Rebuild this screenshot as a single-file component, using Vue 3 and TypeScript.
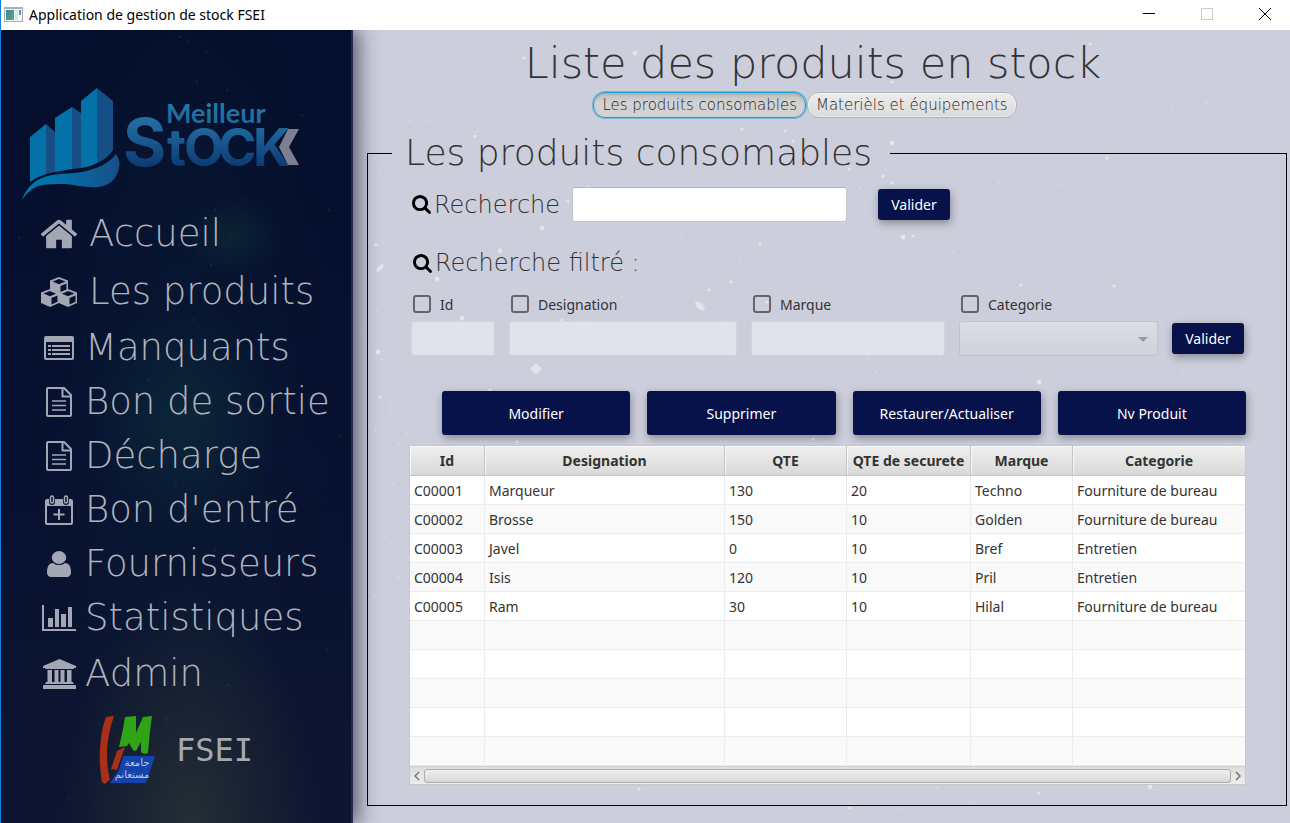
<script setup lang="ts">
import { ref } from 'vue'

interface NavItem {
  label: string
  icon: string
  width: number
  height: number
  tall?: boolean
  wide?: boolean
}

const navItems: NavItem[] = [
  { label: 'Accueil', icon: 'home', width: 36, height: 30, tall: true, wide: true },
  { label: 'Les produits', icon: 'cubes', width: 38, height: 32, tall: true, wide: true },
  { label: 'Manquants', icon: 'list', width: 30, height: 24 },
  { label: 'Bon de sortie', icon: 'file', width: 26, height: 30 },
  { label: 'Décharge', icon: 'file', width: 26, height: 30 },
  { label: "Bon d'entré", icon: 'calendar', width: 28, height: 30 },
  { label: 'Fournisseurs', icon: 'user', width: 24, height: 26 },
  { label: 'Statistiques', icon: 'chart', width: 34, height: 26 },
  { label: 'Admin', icon: 'bank', width: 33, height: 30, tall: true },
]

const tabs = ['Les produits consomables', 'Materièls et équipements']
const activeTab = ref(0)

const search = ref('')
const filterId = ref('')
const filterDesignation = ref('')
const filterMarque = ref('')
const filterCategorie = ref('')
const useId = ref(false)
const useDesignation = ref(false)
const useMarque = ref(false)
const useCategorie = ref(false)

const actions = ['Modifier', 'Supprimer', 'Restaurer/Actualiser', 'Nv Produit']

const columns = ['Id', 'Designation', 'QTE', 'QTE de securete', 'Marque', 'Categorie']
const products: string[][] = [
  ['C00001', 'Marqueur', '130', '20', 'Techno', 'Fourniture de bureau'],
  ['C00002', 'Brosse', '150', '10', 'Golden', 'Fourniture de bureau'],
  ['C00003', 'Javel', '0', '10', 'Bref', 'Entretien'],
  ['C00004', 'Isis', '120', '10', 'Pril', 'Entretien'],
  ['C00005', 'Ram', '30', '10', 'Hilal', 'Fourniture de bureau'],
]
const emptyRows = 5

// [x, y, size] of every light speck on the main background
const specks: number[][] = [
  [171, 28, 2], [282, 23, 3], [287, 25, 1], [122, 106, 2], [123, 102, 1], [28, 140, 1], [74, 91, 1], [57, 91, 1],
  [215, 171, 2], [389, 99, 2], [233, 151, 1], [234, 157, 2], [189, 198, 3], [316, 176, 1], [432, 101, 2], [440, 111, 2],
  [539, 113, 3], [496, 139, 2], [530, 146, 2], [539, 153, 2], [507, 158, 1], [573, 95, 1], [620, 136, 1], [646, 152, 1],
  [754, 128, 2], [706, 155, 1], [737, 14, 2], [844, 54, 1], [819, 76, 1], [854, 73, 1], [539, 52, 2], [582, 41, 1],
  [550, 207, 3], [560, 206, 2], [600, 222, 1], [645, 215, 1], [587, 226, 1], [668, 255, 2], [646, 266, 1], [761, 256, 2],
  [23, 215, 2], [25, 250, 1], [24, 280, 1], [147, 221, 3], [84, 249, 3], [146, 256, 1], [194, 258, 1], [253, 252, 1],
  [109, 288, 3], [49, 290, 1], [42, 310, 1], [25, 322, 3], [29, 330, 1], [209, 290, 2], [231, 294, 1], [269, 267, 1],
  [256, 267, 1], [303, 267, 1], [356, 260, 2], [378, 252, 2], [387, 228, 1], [407, 214, 2], [359, 241, 1], [328, 207, 1],
  [316, 202, 1], [338, 218, 1], [414, 272, 2], [351, 305, 1], [382, 324, 1], [375, 294, 1], [686, 352, 3], [714, 360, 1],
  [830, 341, 1], [855, 350, 1], [515, 328, 1], [516, 332, 1], [523, 342, 1], [137, 361, 3], [252, 362, 1], [27, 367, 2],
  [37, 378, 1], [22, 400, 1], [54, 404, 1], [46, 414, 1], [164, 412, 2], [173, 416, 1], [460, 409, 2], [877, 414, 1],
  [40, 454, 1], [32, 508, 1], [46, 547, 1], [21, 566, 1], [286, 759, 2], [444, 783, 1], [373, 789, 1], [497, 778, 2],
  [584, 758, 1], [686, 763, 2], [797, 757, 3], [802, 760, 1], [909, 634, 1], [922, 522, 1], [8, 300, 1], [7, 92, 1],
  [917, 702, 1], [618, 774, 1], [546, 779, 1], [229, 797, 1], [908, 292, 1], [756, 294, 1], [588, 324, 1], [620, 318, 1],
]

// [x, y] of the dust on the sidebar background
const dust: number[][] = [
  [179, 7], [187, 12], [205, 22], [226, 60], [196, 52], [301, 85], [245, 170], [214, 180],
  [178, 215], [210, 235], [170, 260], [120, 310], [192, 290], [230, 330], [328, 180], [148, 350],
  [161, 420], [223, 440], [175, 455], [140, 480], [214, 520], [188, 600], [122, 640], [227, 655],
  [166, 690], [339, 406], [326, 620], [68, 768], [190, 715], [18, 208], [127, 127], [202, 130],
]
</script>

<template>
  <div class="window">
    <header class="titlebar">
      <svg class="app-icon" width="19" height="15" viewBox="0 0 19 15" aria-hidden="true">
        <rect x="0" y="0" width="19" height="15" fill="#a9adb5" />
        <rect x="1" y="2" width="17" height="12" fill="#f4f6f8" />
        <rect x="2" y="3" width="8" height="10" fill="url(#appGreen)" />
        <rect x="11" y="3" width="3" height="10" fill="#dfe6e6" />
        <rect x="15" y="3" width="2" height="5" fill="#5d8fd0" />
        <defs>
          <linearGradient id="appGreen" x1="0" y1="0" x2="1" y2="1">
            <stop offset="0" stop-color="#3f7f9d" />
            <stop offset="1" stop-color="#58b079" />
          </linearGradient>
        </defs>
      </svg>
      <span class="app-name">Application de gestion de stock FSEI</span>
      <div class="window-controls">
        <button type="button" aria-label="Réduire">
          <svg width="12" height="12" viewBox="0 0 12 12"><path d="M0 5.5h12" stroke="#000" /></svg>
        </button>
        <button type="button" aria-label="Agrandir" disabled>
          <svg width="12" height="12" viewBox="0 0 12 12"><rect x=".5" y=".5" width="11" height="11" fill="none" stroke="#ccc" /></svg>
        </button>
        <button type="button" aria-label="Fermer">
          <svg width="12" height="12" viewBox="0 0 12 12"><path d="M0 0l12 12M12 0L0 12" stroke="#000" /></svg>
        </button>
      </div>
    </header>

    <div class="body">
      <aside class="sidebar">
        <svg class="dust" viewBox="0 0 350 793" preserveAspectRatio="xMidYMin slice" aria-hidden="true">
          <circle v-for="(d, i) in dust" :key="i" :cx="d[0]" :cy="d[1]" r="1" />
        </svg>

        <svg class="brand" width="280" height="116" viewBox="0 0 280 116" role="img" aria-label="Meilleur Stock">
          <defs>
            <linearGradient id="brandText" gradientUnits="userSpaceOnUse" x1="0" y1="18" x2="0" y2="82">
              <stop offset="0" stop-color="#2377a6" />
              <stop offset=".4" stop-color="#1f6499" />
              <stop offset="1" stop-color="#0a3772" />
            </linearGradient>
            <linearGradient id="brandWave" x1="0" y1="0" x2="1" y2="0">
              <stop offset="0" stop-color="#0078ae" />
              <stop offset=".4" stop-color="#0370a7" />
              <stop offset="1" stop-color="#174f88" />
            </linearGradient>
          </defs>
          <path d="M9 50L25 37V87Q16 90 9 95Z" fill="#0472a8" />
          <path d="M25 37L34 45V85L25 87Z" fill="#154f86" />
          <path d="M34 31L51 20V82L34 85Z" fill="#0472a8" />
          <path d="M51 20L60 26V81L51 82Z" fill="#154f86" />
          <path d="M60 14L76 1V76Q69 80 60 81Z" fill="#0472a8" />
          <path d="M76 1L92 14V63Q86 72 76 76Z" fill="#154f86" />
          <path d="M1 113C5 101 14 91 31 88C44 86 51 87 61 85C75 82 88 77 95 67C100 74 99 81 96 87C93 94 87 99 77 100C65 101 56 98 44 97C35 97 25 97 17 99C10 102 5 107 1 113Z" fill="url(#brandWave)" />
          <g fill="url(#brandText)">
            <text x="145" y="36" class="brand-top">Meilleur</text>
            <text x="102" y="79" class="brand-s">S</text>
            <text x="146" y="79" class="brand-low">t</text>
            <text x="163" y="79" class="brand-low">O</text>
            <text x="197" y="79" class="brand-low">C</text>
            <text x="232" y="79" class="brand-low">K</text>
          </g>
          <path d="M267 42h11L268 60l10 18h-11L258 60Z" fill="#7c7f90" />
        </svg>

        <nav class="nav" aria-label="Menu principal">
          <a
            v-for="item in navItems"
            :key="item.label"
            href="#"
            class="nav-item"
            :class="{ tall: item.tall, wide: item.wide }"
            @click.prevent
          >
            <span class="nav-icon">
              <svg v-if="item.icon === 'home'" :width="item.width" :height="item.height" viewBox="90 240 1612 1310">
                <path fill="currentColor" d="M1472 992v480q0 26-19 45t-45 19h-384v-384h-256v384h-384q-26 0-45-19t-19-45v-480q0-1 .5-3t.5-3l575-474 575 474q1 2 1 6zm223-69l-62 74q-8 9-21 11h-3q-13 0-21-7l-692-577-692 577q-12 8-24 7-13-2-21-11l-62-74q-8-10-7-23.5t11-21.5l719-599q32-26 76-26t76 26l244 204v-195q0-14 9-23t23-9h192q14 0 23 9t9 23v408l219 182q10 8 11 21.5t-7 23.5z" />
              </svg>
              <svg v-else-if="item.icon === 'cubes'" :width="item.width" :height="item.height" viewBox="0 0 38 32">
                <g fill="currentColor" fill-rule="evenodd">
                  <path v-for="(o, i) in [[19, 10], [10, 22], [28, 22]]" :key="i" :transform="`translate(${o[0]} ${o[1]})`" d="M0-9L9-5.500V5L0 9L-9 5V-5.500ZM0-7L-6.500-4.500L0-1.800L6.500-4.500ZM1.500 0V6.500L7.500 3.800V-2.600Z" />
                </g>
              </svg>
              <svg v-else-if="item.icon === 'list'" :width="item.width" :height="item.height" viewBox="0 0 30 24">
                <path fill="currentColor" fill-rule="evenodd" d="M2 0H28a2 2 0 0 1 2 2V22a2 2 0 0 1-2 2H2a2 2 0 0 1-2-2V2a2 2 0 0 1 2-2ZM2 6V22H28V6ZM4 9H7V11H4ZM8 9H26V11H8ZM4 13H7V15H4ZM8 13H26V15H8ZM4 17H7V19H4ZM8 17H26V19H8Z" />
              </svg>
              <svg v-else-if="item.icon === 'file'" :width="item.width" :height="item.height" viewBox="0 0 26 30">
                <g fill="none" stroke="currentColor" stroke-width="2">
                  <path d="M1 2q0-1 1-1H18L25 8V28q0 1-1 1H2q-1 0-1-1Z" stroke-linejoin="round" />
                  <path d="M16.500 1V9.500H25" />
                  <path d="M6 14H20M6 18.500H20M6 23H20" stroke-width="1.700" />
                </g>
              </svg>
              <svg v-else-if="item.icon === 'calendar'" :width="item.width" :height="item.height" viewBox="0 0 28 30">
                <path fill="currentColor" fill-rule="evenodd" d="M2 4H4V7a3 3 0 0 0 6 0V4H18V7a3 3 0 0 0 6 0V4H26a2 2 0 0 1 2 2V28a2 2 0 0 1-2 2H2a2 2 0 0 1-2-2V6a2 2 0 0 1 2-2ZM2 11V28H26V11Z" />
                <rect x="5.500" y="1" width="3" height="7" rx="1.500" fill="none" stroke="currentColor" stroke-width="1.500" />
                <rect x="19.500" y="1" width="3" height="7" rx="1.500" fill="none" stroke="currentColor" stroke-width="1.500" />
                <path d="M14 14V25M8.500 19.500H19.500" stroke="currentColor" stroke-width="2" />
              </svg>
              <svg v-else-if="item.icon === 'user'" :width="item.width" :height="item.height" viewBox="256 128 1280 1536" preserveAspectRatio="none">
                <path fill="currentColor" d="M1536 1399q0 109-62.500 187t-150.500 78h-854q-88 0-150.500-78t-62.500-187q0-85 8.500-160.500t31.500-152 58.500-131 94-89 134.500-34.500q131 128 313 128t313-128q76 0 134.500 34.500t94 89 58.500 131 31.500 152 8.500 160.500zm-256-887q0 159-112.500 271.500t-271.500 112.500-271.500-112.500-112.500-271.500 112.500-271.500 271.500-112.500 271.500 112.500 112.500 271.500z" />
              </svg>
              <svg v-else-if="item.icon === 'chart'" :width="item.width" :height="item.height" viewBox="0 0 34 26">
                <path fill="currentColor" d="M0 0H2V24H34V26H0ZM6 13H11V22H6ZM13 4H17V22H13ZM19 9H24V22H19ZM26 2H30V22H26Z" />
              </svg>
              <svg v-else :width="item.width" :height="item.height" viewBox="0 0 33 30">
                <path fill="currentColor" d="M16.500 0L33 7V9H31q0 1-1 1H3q-1 0-1-1H0V7ZM4.500 11H9V23H11.500V11H15.500V23H17.500V11H21.500V23H24V11H28.500V23H29.500q1 0 1 1V25H2.500V24q0-1 1-1H4.500ZM1 26H32q1 0 1 1V30H0V27q0-1 1-1Z" />
              </svg>
            </span>
            <span class="nav-label">{{ item.label }}</span>
          </a>
        </nav>

        <div class="faculty">
          <svg width="58" height="70" viewBox="0 0 58 70" aria-hidden="true">
            <path d="M7 2L15 1Q9 18 8 36Q8 54 11 65L9 66L6 69L3 67Q0 50 1 34Q2 15 7 2Z" fill="#aa2f18" />
            <path d="M26 2L37 1L37 18L44 2L53 1L51 16L49 38L45 39L42 37L42 27L37 36L34 35L30 28L28 31L20 32L24 14Z" fill="#2fa516" />
            <path d="M24 41H56L47 68H11L20 55Z" fill="#1244ae" />
            <path d="M18 36L26 32L22 43L18 55L12 54Z" fill="#aa2f18" />
            <text x="38" y="51" class="faculty-script">جامعة</text>
            <text x="33" y="63" class="faculty-script">مستغانم</text>
          </svg>
          <span class="faculty-name">FSEI</span>
        </div>
      </aside>

      <main class="main">
        <svg class="specks" viewBox="0 0 937 793" preserveAspectRatio="xMidYMin slice" aria-hidden="true">
          <circle v-for="(s, i) in specks" :key="i" :cx="s[0]" :cy="s[1]" :r="s[2] * 0.8" />
          <path d="M183 333l6 6-6 6-6-6z" />
          <ellipse cx="347" cy="276" rx="6" ry="3" transform="rotate(45 347 276)" />
          <ellipse cx="27" cy="238" rx="5" ry="2" transform="rotate(-50 27 238)" />
        </svg>

        <h1 class="title">Liste des produits en stock</h1>

        <div class="tabs" role="tablist">
          <button
            v-for="(tab, i) in tabs"
            :key="tab"
            type="button"
            role="tab"
            class="tab"
            :class="{ active: i === activeTab }"
            :aria-selected="i === activeTab"
            @click="activeTab = i"
          >{{ tab }}</button>
        </div>

        <fieldset class="panel">
          <legend>Les produits consomables</legend>

          <form class="search" @submit.prevent>
            <label class="search-label" for="search">
              <svg width="19" height="19" viewBox="64 128 1664 1664" aria-hidden="true"><path d="M1216 832q0-185-131.500-316.500t-316.500-131.500-316.500 131.500-131.500 316.500 131.500 316.500 316.500 131.500 316.500-131.500 131.500-316.500zm512 832q0 52-38 90t-90 38q-54 0-90-38l-343-342q-179 124-399 124-143 0-273.500-55.500t-225-150-150-225-55.500-273.500 55.500-273.500 150-225 225-150 273.500-55.500 273.500 55.500 225 150 150 225 55.500 273.500q0 220-124 399l343 343q37 37 37 90z" /></svg>
              <span>Recherche</span>
            </label>
            <input id="search" v-model="search" type="text" class="field search-field" />
            <button type="submit" class="primary small">Valider</button>
          </form>

          <h2 class="search-label filter-title">
            <svg width="19" height="19" viewBox="64 128 1664 1664" aria-hidden="true"><path d="M1216 832q0-185-131.500-316.500t-316.500-131.500-316.500 131.500-131.500 316.500 131.500 316.500 316.500 131.500 316.500-131.500 131.500-316.500zm512 832q0 52-38 90t-90 38q-54 0-90-38l-343-342q-179 124-399 124-143 0-273.500-55.500t-225-150-150-225-55.500-273.500 55.500-273.500 150-225 225-150 273.500-55.500 273.500 55.500 225 150 150 225 55.500 273.500q0 220-124 399l343 343q37 37 37 90z" /></svg>
            <span>Recherche filtré :</span>
          </h2>

          <form class="filters" @submit.prevent>
            <div class="filter">
              <label class="check"><input v-model="useId" type="checkbox" /><span>Id</span></label>
              <input v-model="filterId" type="text" class="field" aria-label="Valeur Id" :disabled="!useId" />
            </div>
            <div class="filter">
              <label class="check"><input v-model="useDesignation" type="checkbox" /><span>Designation</span></label>
              <input v-model="filterDesignation" type="text" class="field" aria-label="Valeur Designation" :disabled="!useDesignation" />
            </div>
            <div class="filter">
              <label class="check"><input v-model="useMarque" type="checkbox" /><span>Marque</span></label>
              <input v-model="filterMarque" type="text" class="field" aria-label="Valeur Marque" :disabled="!useMarque" />
            </div>
            <div class="filter">
              <label class="check"><input v-model="useCategorie" type="checkbox" /><span>Categorie</span></label>
              <div class="combo">
                <select v-model="filterCategorie" aria-label="Valeur Categorie" :disabled="!useCategorie">
                  <option value=""></option>
                  <option>Fourniture de bureau</option>
                  <option>Entretien</option>
                </select>
              </div>
            </div>
            <button type="submit" class="primary small">Valider</button>
          </form>

          <div class="actions">
            <button v-for="action in actions" :key="action" type="button" class="primary">{{ action }}</button>
          </div>

          <div class="grid">
            <table>
              <colgroup>
                <col class="c-id" />
                <col class="c-designation" />
                <col class="c-qte" />
                <col class="c-securite" />
                <col class="c-marque" />
                <col />
              </colgroup>
              <thead>
                <tr>
                  <th v-for="c in columns" :key="c" scope="col">{{ c }}</th>
                </tr>
              </thead>
              <tbody>
                <tr v-for="row in products" :key="row[0]">
                  <td v-for="(cell, i) in row" :key="i">{{ cell }}</td>
                </tr>
                <tr v-for="n in emptyRows" :key="'empty' + n">
                  <td v-for="c in columns" :key="c"></td>
                </tr>
              </tbody>
            </table>
            <div class="scrollbar">
              <button type="button" aria-label="Défiler à gauche">
                <svg width="6" height="10" viewBox="0 0 6 10"><path d="M5 1L1 5l4 4" fill="none" stroke="#777" stroke-width="1.500" /></svg>
              </button>
              <div class="thumb"></div>
              <button type="button" aria-label="Défiler à droite">
                <svg width="6" height="10" viewBox="0 0 6 10"><path d="M1 1l4 4-4 4" fill="none" stroke="#777" stroke-width="1.500" /></svg>
              </button>
            </div>
          </div>
        </fieldset>
      </main>
    </div>
  </div>
</template>

<style>
body {
  margin: 0;
}
</style>

<style scoped>
* {
  box-sizing: border-box;
}

.window {
  --display: 'DejaVu Sans Light', 'DejaVu Sans', sans-serif;
  --ui: 'Noto Sans', 'Open Sans', sans-serif;
  min-height: 100vh;
  display: flex;
  flex-direction: column;
  border-left: 1px solid #1080dc;
  font-family: var(--ui);
  font-size: 14px;
  color: #333;
  background: #cccedc;
}

button {
  font-family: inherit;
  cursor: pointer;
}

.titlebar {
  position: relative;
  z-index: 2;
  display: flex;
  align-items: center;
  height: 30px;
  padding-left: 3px;
  background: #fff;
  color: #000;
}

.app-icon {
  margin-bottom: 2px;
}

.app-name {
  margin: 0 0 2px 6px;
}

.window-controls {
  display: flex;
  margin: 0 -4px 2px auto;
}

.window-controls button {
  display: grid;
  place-items: center;
  width: 58px;
  height: 28px;
  padding: 0;
  border: 0;
  background: none;
}

.body {
  flex: 1;
  display: grid;
  grid-template-columns: 352px minmax(0, 1fr);
  overflow: hidden;
}

.sidebar {
  position: relative;
  z-index: 1;
  display: flex;
  flex-direction: column;
  border-right: 2px solid #24295a;
  background:
    radial-gradient(ellipse 50px 40px at 66% 26%, rgba(18, 60, 56, 0.4), transparent),
    radial-gradient(ellipse 100px 110px at 52% 49%, rgba(16, 60, 66, 0.4), transparent),
    radial-gradient(ellipse 130px 240px at 54% 100%, rgba(44, 54, 54, 0.75), transparent),
    radial-gradient(ellipse 150px 500px at 52% 45%, rgba(10, 34, 54, 0.4), transparent),
    linear-gradient(#050e2c, #071130 50%, #0d1531);
  box-shadow: 2px 0 20px 2px rgba(20, 22, 40, 0.7);
}

.dust,
.specks {
  position: absolute;
  inset: 0;
  width: 100%;
  height: 100%;
  pointer-events: none;
}

.dust {
  fill: rgba(90, 120, 130, 0.22);
}

.specks {
  fill: rgba(234, 240, 248, 0.7);
}

.brand {
  position: relative;
  margin: 57px 0 0 20px;
}

.brand-top {
  font-family: 'Lato', sans-serif;
  font-size: 27px;
  font-weight: 700;
}

.brand-s {
  font-family: 'Inter', sans-serif;
  font-size: 66px;
  font-weight: 700;
}

.brand-low {
  font-family: 'Inter', sans-serif;
  font-size: 52px;
  font-weight: 700;
}

.nav {
  position: relative;
  display: flex;
  flex-direction: column;
  margin-top: 2px;
  padding-left: 39px;
}

.nav-item {
  display: flex;
  align-items: center;
  gap: 7px;
  height: 54px;
  color: #a3a7b4;
  text-decoration: none;
}

.nav-item.tall {
  height: 58px;
}

.nav-item.wide {
  gap: 11px;
}

.nav-icon {
  display: grid;
  place-items: center;
  width: 38px;
}

.nav-icon svg {
  display: block;
}

.nav-label {
  font-family: var(--display);
  font-weight: 200;
  font-size: 37px;
  line-height: 44px;
  color: #b0b3bd;
  white-space: nowrap;
}

.faculty {
  position: relative;
  display: flex;
  align-items: center;
  gap: 19px;
  margin: 12px 0 0 98px;
}

.faculty-script {
  font-family: 'DejaVu Sans', sans-serif;
  font-size: 10px;
  fill: #c3cbe0;
  text-anchor: middle;
}

.faculty-name {
  font-family: 'DejaVu Sans Mono', monospace;
  font-size: 32px;
  color: #a6a8b0;
}

.main {
  position: relative;
  display: flex;
  flex-direction: column;
  padding: 8px 3px 17px 14px;
}

.title {
  position: relative;
  margin: 0 28px 4px 0;
  font-family: var(--display);
  font-weight: 200;
  font-size: 43px;
  line-height: 50px;
  text-align: center;
}

.tabs {
  position: relative;
  display: flex;
  justify-content: center;
  gap: 1px;
  margin: 0 44px 13px 0;
}

.tab {
  height: 26px;
  padding: 0 8px;
  border: 1px solid #b4b4b8;
  border-radius: 12px;
  background: linear-gradient(#ededed, #dadada);
  box-shadow: inset 0 0 0 1px rgba(255, 255, 255, 0.45);
  font-family: var(--display);
  font-size: 15px;
  font-weight: 300;
  color: #222;
}

.tab.active {
  border-color: #1a9fd4;
  background: linear-gradient(#c2c2c2, #d2d2d2 40%, #d2d2d2);
  box-shadow: 0 0 0 1px rgba(26, 159, 212, 0.5), inset 0 2px 3px rgba(0, 0, 0, 0.12);
}

.panel {
  position: relative;
  flex: 1;
  min-width: 0;
  margin: 0;
  padding: 12px 40px 20px 41px;
  border: 1px solid #000;
}

.panel legend {
  margin-left: -17px;
  padding: 0 18px 0 13px;
  font-family: var(--display);
  font-weight: 200;
  font-size: 36px;
  line-height: 44px;
}

.search {
  display: flex;
  align-items: center;
  padding-left: 3px;
}

.search-label {
  display: flex;
  align-items: center;
  gap: 3px;
  margin: 0;
  font-family: var(--display);
  font-weight: 200;
  font-size: 24px;
  line-height: 30px;
}

.search .search-label {
  width: 160px;
}

.field {
  display: block;
  width: 100%;
  height: 35px;
  padding: 4px 8px;
  border: 1px solid #c4c4cc;
  border-top-color: #b4b4bc;
  border-radius: 3px;
  background: #fff;
  font: inherit;
  color: #333;
}

.field:disabled {
  border-color: #dcdce4;
  opacity: 0.42;
}

.search-field {
  width: 275px;
}

.primary {
  height: 44px;
  padding: 0;
  border: 0;
  border-radius: 3px;
  background: #07114a;
  box-shadow: 1px 3px 8px rgba(0, 0, 0, 0.35);
  color: #fff;
  font-size: 14px;
}

.primary.small {
  width: 72px;
  height: 31px;
}

.search .primary {
  margin-left: 31px;
}

.filter-title {
  margin-top: 26px;
  padding-left: 4px;
}

.filters {
  display: grid;
  grid-template-columns: 84fr 228fr 194fr 199fr 72px;
  gap: 14px;
  align-items: end;
  margin-top: 14px;
  padding: 0 2px;
}

.filters .primary {
  margin-bottom: 2px;
}

.check {
  display: flex;
  align-items: center;
  gap: 9px;
  height: 24px;
  margin-bottom: 5px;
  padding-left: 2px;
}

.check input {
  appearance: none;
  width: 18px;
  height: 18px;
  margin: 0;
  border: 2px solid #666;
  border-radius: 3px;
}

.check input:checked {
  background: #07114a;
}

.combo {
  position: relative;
}

.combo select {
  appearance: none;
  display: block;
  width: 100%;
  height: 35px;
  border: 1px solid #b4b4b8;
  border-radius: 3px;
  background: linear-gradient(#f0f0f0, #d8d8d8);
  font: inherit;
}

.combo select:disabled {
  opacity: 0.45;
}

.combo::after {
  content: '';
  position: absolute;
  right: 10px;
  top: 16px;
  border: 5px solid transparent;
  border-top-color: #97979f;
  border-bottom: 0;
  pointer-events: none;
}

.actions {
  display: grid;
  grid-template-columns: repeat(4, 1fr);
  gap: 17px;
  margin: 35px 0 10px 33px;
}

.grid {
  border: 1px solid #c8c8c8;
  background: #fff;
}

table {
  width: 100%;
  table-layout: fixed;
  border-collapse: separate;
  border-spacing: 0;
}

.c-id {
  width: 75px;
}

.c-designation {
  width: 240px;
}

.c-qte {
  width: 122px;
}

.c-securite {
  width: 124px;
}

.c-marque {
  width: 102px;
}

th {
  height: 30px;
  padding: 0;
  border-right: 1px solid #c4c4c4;
  border-bottom: 1px solid #c4c4c4;
  background: linear-gradient(#efefef, #d9d9d9);
  box-shadow: inset 1px 1px 0 rgba(255, 255, 255, 0.7);
  font-size: 14px;
  font-weight: 700;
  white-space: nowrap;
}

td {
  height: 29px;
  padding: 0 4px;
  border-right: 1px solid #ececec;
  border-bottom: 1px solid #ececec;
  white-space: nowrap;
}

th:last-child,
td:last-child {
  border-right: 0;
}

tbody tr:nth-child(even) {
  background: #f9f9f9;
}

.scrollbar {
  display: flex;
  align-items: center;
  height: 18px;
  border-top: 1px solid #d0d0d0;
  background: linear-gradient(#dedede, #ececec);
}

.scrollbar button {
  display: grid;
  place-items: center;
  width: 14px;
  height: 16px;
  padding: 0;
  border: 0;
  background: none;
}

.thumb {
  flex: 1;
  height: 14px;
  border: 1px solid #adadad;
  border-radius: 3px;
  background: linear-gradient(#efefef, #d8d8d8);
}
</style>
